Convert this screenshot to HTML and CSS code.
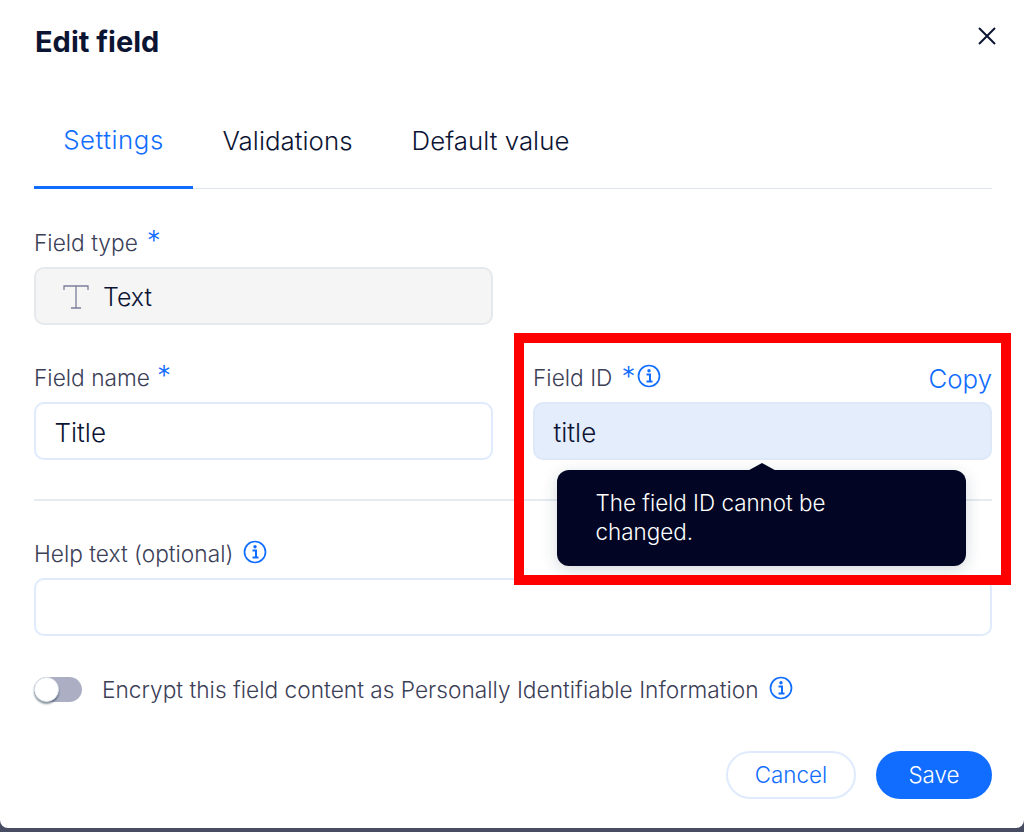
FILE: index.html
```html
<!DOCTYPE html>
<html lang="en">
<head>
<meta charset="utf-8">
<title>Edit field</title>
<link rel="stylesheet" href="styles.css">
</head>
<body>
<main class="dialog">
  <header class="head">
    <h1 class="title">Edit field</h1>
    <svg class="close" viewBox="0 0 20 20"><path d="M2 2 18 18M18 2 2 18"/></svg>
  </header>
  <nav class="tabs">
    <span class="tab active">Settings</span>
    <span class="tab">Validations</span>
    <span class="tab">Default value</span>
  </nav>
  <section class="row row-type">
    <div class="field">
      <div class="label"><span>Field type</span><span class="star">*</span></div>
      <div class="box box-grey">
        <svg class="t-icon" viewBox="0 0 26 24"><path d="M1 5V1H25V5M13 1V23M8 23H18"/></svg>
        <span>Text</span>
      </div>
    </div>
    <div class="field"></div>
  </section>
  <section class="row row-name">
    <div class="field">
      <div class="label"><span>Field name</span><span class="star star-name">*</span></div>
      <div class="box">Title</div>
    </div>
    <div class="field">
      <div class="label">
        <span>Field ID</span><span class="star star-tight">*</span>
        <svg class="info" viewBox="0 0 24 24"><circle cx="12" cy="12" r="10.5"/><circle class="dot" cx="12" cy="6.8" r="1.7"/><path class="stem" d="M9.5 10.5H13V17M9.5 17.5H15.5"/></svg>
        <span class="copy">Copy</span>
      </div>
      <div class="box box-blue">title</div>
    </div>
  </section>
  <hr class="divider">
  <section class="help">
    <div class="label label-help"><span>Help text (optional)</span>
      <svg class="info" viewBox="0 0 24 24"><circle cx="12" cy="12" r="10.5"/><circle class="dot" cx="12" cy="6.8" r="1.7"/><path class="stem" d="M9.5 10.5H13V17M9.5 17.5H15.5"/></svg>
    </div>
    <div class="box"></div>
  </section>
  <section class="encrypt">
    <span class="toggle"><span class="knob"></span></span>
    <span class="encrypt-text">Encrypt this field content as Personally Identifiable Information</span>
    <svg class="info" viewBox="0 0 24 24"><circle cx="12" cy="12" r="10.5"/><circle class="dot" cx="12" cy="6.8" r="1.7"/><path class="stem" d="M9.5 10.5H13V17M9.5 17.5H15.5"/></svg>
  </section>
  <footer class="actions">
    <button class="btn btn-cancel">Cancel</button>
    <button class="btn btn-save">Save</button>
  </footer>
</main>
<div class="tooltip"><span class="arrow"></span>The field ID cannot be changed.</div>
<div class="highlight"></div>
</body>
</html>
```

FILE: styles.css
```css
* { box-sizing: border-box; }
html, body { margin: 0; height: 832px; overflow: hidden; }
body {
  background: #474c63;
  font-family: Inter, "Noto Sans", sans-serif;
  color: #0c1433;
  position: relative;
}
.dialog {
  height: 828px;
  background: #fff;
  border-radius: 0 0 8px 8px;
  padding: 0 32px 0 34px;
  display: flex;
  flex-direction: column;
}
.head {
  height: 84px;
  display: flex;
  justify-content: space-between;
  align-items: flex-start;
  padding-top: 25px;
}
.title { margin: 0; font-size: 29px; line-height: 34px; font-weight: 700; margin-left: 1px; }
.close { width: 20px; height: 20px; margin-top: 1px; margin-right: -5px; fill: none; stroke: #0c1433; stroke-width: 2; }
.tabs {
  height: 105px;
  display: flex;
  border-bottom: 1px solid #dfe5eb;
  align-items: stretch;
}
.tab { font-size: 25.8px; font-weight: 350; letter-spacing: .05px; display: flex; align-items: center; padding: 8px 29.5px 0; margin-bottom: -1px; }
.tab.active { color: #116dff; border-bottom: 3px solid #116dff; width: 159px; justify-content: center; padding: 8px 0 0; letter-spacing: .55px; }
.row { display: grid; grid-template-columns: 459px 459px; column-gap: 40px; }
.row-type { padding-top: 40px; }
.row-name { padding-top: 39px; }
.field { min-width: 0; }
.label {
  height: 29px;
  display: flex;
  align-items: center;
  font-size: 22.7px;
  font-weight: 350;
  color: #3b4057;
  margin-bottom: 9px;
  padding-bottom: 2px;
}
.star { color: #116dff; font-size: 28px; font-weight: 300; line-height: 1; margin-left: 9px; position: relative; top: -2px; }
.star-name { margin-left: 7px; }
.star-tight { top: -1px; }
.copy { margin-left: auto; color: #116dff; font-size: 25.8px; font-weight: 350; padding-top: 2px; }
.info { width: 24px; height: 24px; fill: none; stroke: #116dff; stroke-width: 1.7; flex: none; }
.info .dot { fill: #116dff; stroke: none; }
.info .stem { stroke-width: 2; }
.label .info { margin-left: 2px; margin-top: -3px; }
.box {
  height: 58px;
  border: 2px solid #dfebfd;
  border-radius: 10px;
  background: #fff;
  font-size: 26px;
  font-weight: 350;
  padding: 2px 18.5px 0;
  display: flex;
  align-items: center;
}
.box-grey { background: #f5f5f6; border-color: #e6e9ec; padding-left: 27px; gap: 14px; font-size: 25px; }
.box-blue { background: #e3edfc; border-color: #dde8f8; }
.t-icon { width: 26px; height: 24px; fill: none; stroke: #7a7f97; stroke-width: 1.3; }
.divider { margin: 39px 0 0; border: 0; border-top: 2px solid #e6ebf2; }
.help { padding-top: 38px; }
.label-help { margin-bottom: 10px; padding-bottom: 0; }
.label-help .info { margin-left: 10px; margin-top: -4px; }
.encrypt { display: flex; align-items: center; margin-top: 40px; height: 26px; font-size: 22.7px; font-weight: 350; color: #3b4057; }
.toggle { width: 48px; height: 25px; border-radius: 13px; background: #acafc4; position: relative; flex: none; margin-right: 20px; }
.knob { position: absolute; left: 0; top: 0; width: 25px; height: 25px; border-radius: 50%; background: #fff; border: 1px solid #dfe5eb; box-shadow: 0 2px 2px rgba(22, 45, 61, .5); }
.encrypt .info { margin-left: 10px; margin-top: -3px; }
.actions { display: flex; justify-content: flex-end; gap: 20px; margin-top: 49px; }
.btn { height: 48px; border-radius: 24px; font: inherit; font-size: 22.4px; font-weight: 350; padding: 0 0 2px; }
.btn-cancel { width: 130px; background: #fff; color: #116dff; border: 2px solid #dfebfd; }
.btn-save { width: 116px; background: #116dff; color: #fff; border: 0; }
.tooltip {
  position: absolute;
  left: 557px;
  top: 470px;
  width: 409px;
  height: 96px;
  background: #020624;
  color: #fff;
  border-radius: 12px;
  padding: 18px 120px 0 38.5px;
  font-size: 22.4px;
  font-weight: 350;
  line-height: 29px;
  box-shadow: 0 4px 16px rgba(22, 45, 61, .18);
}
.arrow { position: absolute; left: 196px; top: -9px; width: 18px; height: 18px; background: #020624; transform: scale(1, .55) rotate(45deg); transform-origin: center; }
.highlight {
  position: absolute;
  left: 514px;
  top: 333px;
  width: 497px;
  height: 252px;
  border: 10px solid #ff0000;
}
```
